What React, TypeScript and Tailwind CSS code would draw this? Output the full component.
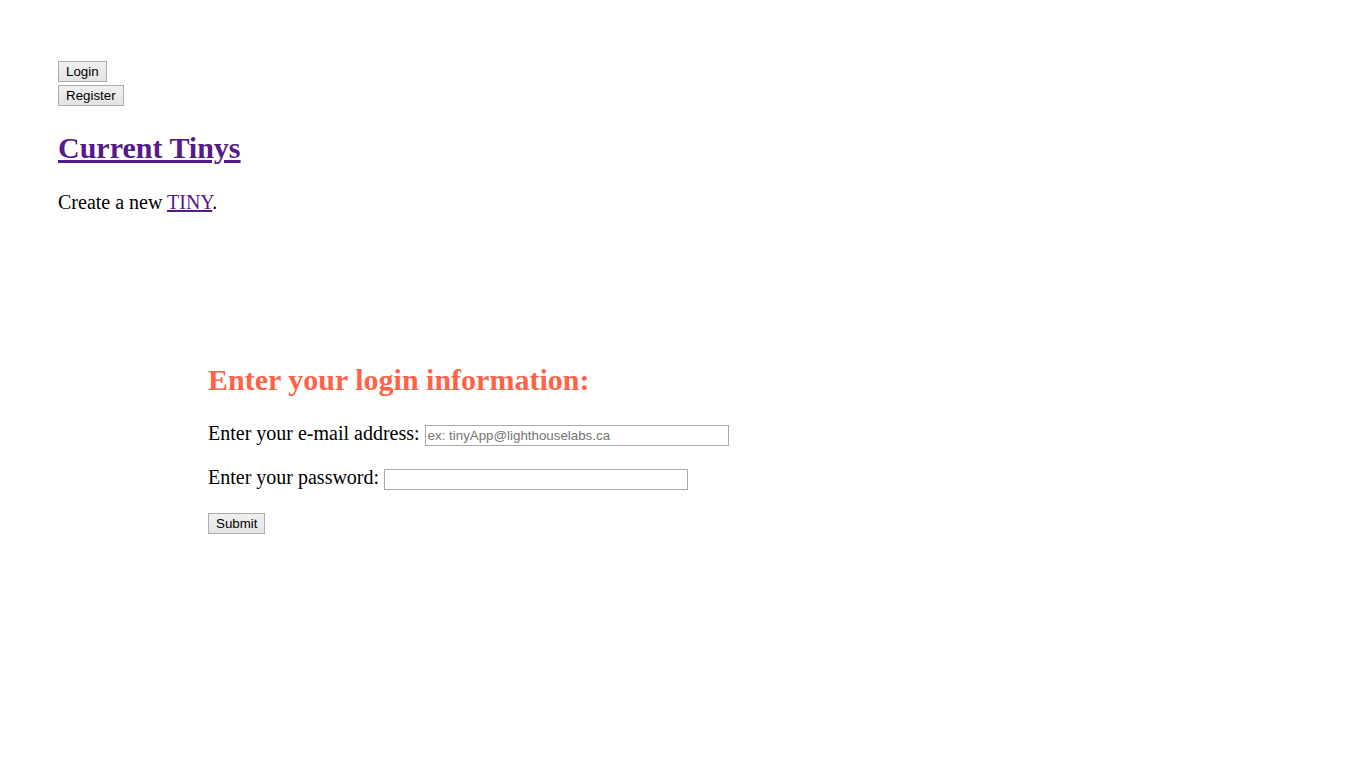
export default function App() {
  const btn =
    "h-[21px] px-[7px] border border-[#adadad] bg-[linear-gradient(#f0f0f0,#e3e3e3)] text-[13.33px] leading-none text-black font-['Liberation_Sans',Arial,sans-serif]";
  const input =
    "h-[21px] w-[304px] border border-[#a9a9a9] px-[2px] text-[13.33px] font-['Liberation_Sans',Arial,sans-serif] placeholder:text-[#757575] outline-none";

  return (
    <div className="min-h-[768px] bg-white px-[58px] pt-[61px] font-['Liberation_Serif','Times_New_Roman',serif] text-black">
      <nav className="flex flex-col items-start gap-[3px]">
        <button className={btn}>Login</button>
        <button className={btn}>Register</button>
      </nav>

      <h1 className="mt-[25px] text-[30px] font-bold leading-[33px]">
        <a href="#" className="text-[#551a8b] underline">
          Current Tinys
        </a>
      </h1>

      <p className="mt-[27px] text-[20px] leading-[22px]">
        Create a new{" "}
        <a href="#" className="text-[#551a8b] underline">
          TINY
        </a>
        .
      </p>

      {/* login form */}
      <section className="ml-[150px] mt-[150px]">
        <h1 className="text-[30px] font-bold leading-[33px] text-[#ff6347]">
          Enter your login information:
        </h1>
        <form className="mt-[26px] flex flex-col items-start text-[20px] leading-[22px]">
          <label className="flex items-start gap-[5px]">
            <span>Enter your e-mail address:</span>
            <input
              type="email"
              className={input + " mt-[3px]"}
              placeholder="ex: tinyApp@lighthouselabs.ca"
            />
          </label>
          <label className="mt-[20px] flex items-start gap-[5px]">
            <span>Enter your password:</span>
            <input type="password" className={input + " mt-[3px]"} />
          </label>
          <button type="submit" className={btn + " mt-[23px]"}>
            Submit
          </button>
        </form>
      </section>
    </div>
  );
}
